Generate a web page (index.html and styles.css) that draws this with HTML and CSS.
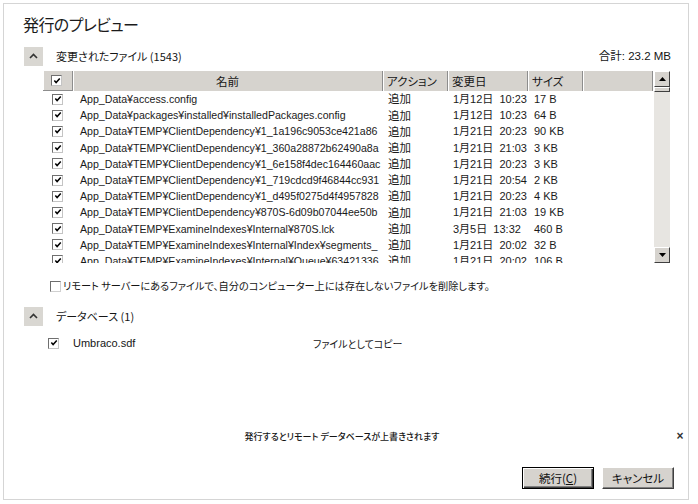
FILE: index.html
```html
<!DOCTYPE html>
<html lang="ja">
<head>
<meta charset="utf-8">
<title>発行のプレビュー</title>
<link rel="stylesheet" href="styles.css">
</head>
<body>
<div class="dialog">
  <h1 class="title">発行のプレビュー</h1>

  <div class="sec-head">
    <span class="toggle"><svg width="19" height="19" viewBox="0 0 19 19"><polyline points="6,11 9.5,7.5 13,11" fill="none" stroke="#333" stroke-width="1.6"/></svg></span>
    <span class="sec-label">変更されたファイル (1543)</span>
    <span class="total">合計: 23.2 MB</span>
  </div>

  <div class="list">
    <div class="grid">
      <div class="thead">
        <div class="th th-cb"><span class="cb on"><svg viewBox="0 0 9 9"><path d="M1.5 4 L3.5 6.3 L7.6 1.8" fill="none" stroke="#000" stroke-width="1.7"/></svg></span></div>
        <div class="th th-name">名前</div>
        <div class="th">アクション</div>
        <div class="th">変更日</div>
        <div class="th">サイズ</div>
        <div class="th"></div>
      </div>
      <div class="tbody">
        <div class="row"><div class="c-cb"><span class="cb on"><svg viewBox="0 0 9 9"><path d="M1.5 4 L3.5 6.3 L7.6 1.8" fill="none" stroke="#000" stroke-width="1.7"/></svg></span></div><div class="c-name">App_Data¥access.config</div><div class="c-act">追加</div><div class="c-date">1月12日&nbsp;&nbsp;10:23</div><div class="c-size">17 B</div><div></div></div>
        <div class="row"><div class="c-cb"><span class="cb on"><svg viewBox="0 0 9 9"><path d="M1.5 4 L3.5 6.3 L7.6 1.8" fill="none" stroke="#000" stroke-width="1.7"/></svg></span></div><div class="c-name">App_Data¥packages¥installed¥installedPackages.config</div><div class="c-act">追加</div><div class="c-date">1月12日&nbsp;&nbsp;10:23</div><div class="c-size">64 B</div><div></div></div>
        <div class="row"><div class="c-cb"><span class="cb on"><svg viewBox="0 0 9 9"><path d="M1.5 4 L3.5 6.3 L7.6 1.8" fill="none" stroke="#000" stroke-width="1.7"/></svg></span></div><div class="c-name">App_Data¥TEMP¥ClientDependency¥1_1a196c9053ce421a86</div><div class="c-act">追加</div><div class="c-date">1月21日&nbsp;&nbsp;20:23</div><div class="c-size">90 KB</div><div></div></div>
        <div class="row"><div class="c-cb"><span class="cb on"><svg viewBox="0 0 9 9"><path d="M1.5 4 L3.5 6.3 L7.6 1.8" fill="none" stroke="#000" stroke-width="1.7"/></svg></span></div><div class="c-name">App_Data¥TEMP¥ClientDependency¥1_360a28872b62490a8a</div><div class="c-act">追加</div><div class="c-date">1月21日&nbsp;&nbsp;21:03</div><div class="c-size">3 KB</div><div></div></div>
        <div class="row"><div class="c-cb"><span class="cb on"><svg viewBox="0 0 9 9"><path d="M1.5 4 L3.5 6.3 L7.6 1.8" fill="none" stroke="#000" stroke-width="1.7"/></svg></span></div><div class="c-name">App_Data¥TEMP¥ClientDependency¥1_6e158f4dec164460aac</div><div class="c-act">追加</div><div class="c-date">1月21日&nbsp;&nbsp;20:23</div><div class="c-size">3 KB</div><div></div></div>
        <div class="row"><div class="c-cb"><span class="cb on"><svg viewBox="0 0 9 9"><path d="M1.5 4 L3.5 6.3 L7.6 1.8" fill="none" stroke="#000" stroke-width="1.7"/></svg></span></div><div class="c-name">App_Data¥TEMP¥ClientDependency¥1_719cdcd9f46844cc931</div><div class="c-act">追加</div><div class="c-date">1月21日&nbsp;&nbsp;20:54</div><div class="c-size">2 KB</div><div></div></div>
        <div class="row"><div class="c-cb"><span class="cb on"><svg viewBox="0 0 9 9"><path d="M1.5 4 L3.5 6.3 L7.6 1.8" fill="none" stroke="#000" stroke-width="1.7"/></svg></span></div><div class="c-name">App_Data¥TEMP¥ClientDependency¥1_d495f0275d4f4957828</div><div class="c-act">追加</div><div class="c-date">1月21日&nbsp;&nbsp;20:23</div><div class="c-size">4 KB</div><div></div></div>
        <div class="row"><div class="c-cb"><span class="cb on"><svg viewBox="0 0 9 9"><path d="M1.5 4 L3.5 6.3 L7.6 1.8" fill="none" stroke="#000" stroke-width="1.7"/></svg></span></div><div class="c-name">App_Data¥TEMP¥ClientDependency¥870S-6d09b07044ee50b</div><div class="c-act">追加</div><div class="c-date">1月21日&nbsp;&nbsp;21:03</div><div class="c-size">19 KB</div><div></div></div>
        <div class="row"><div class="c-cb"><span class="cb on"><svg viewBox="0 0 9 9"><path d="M1.5 4 L3.5 6.3 L7.6 1.8" fill="none" stroke="#000" stroke-width="1.7"/></svg></span></div><div class="c-name">App_Data¥TEMP¥ExamineIndexes¥Internal¥870S.lck</div><div class="c-act">追加</div><div class="c-date">3月5日&nbsp;&nbsp;13:32</div><div class="c-size">460 B</div><div></div></div>
        <div class="row"><div class="c-cb"><span class="cb on"><svg viewBox="0 0 9 9"><path d="M1.5 4 L3.5 6.3 L7.6 1.8" fill="none" stroke="#000" stroke-width="1.7"/></svg></span></div><div class="c-name">App_Data¥TEMP¥ExamineIndexes¥Internal¥Index¥segments_</div><div class="c-act">追加</div><div class="c-date">1月21日&nbsp;&nbsp;20:02</div><div class="c-size">32 B</div><div></div></div>
        <div class="row"><div class="c-cb"><span class="cb on"><svg viewBox="0 0 9 9"><path d="M1.5 4 L3.5 6.3 L7.6 1.8" fill="none" stroke="#000" stroke-width="1.7"/></svg></span></div><div class="c-name">App_Data¥TEMP¥ExamineIndexes¥Internal¥Queue¥63421336</div><div class="c-act">追加</div><div class="c-date">1月21日&nbsp;&nbsp;20:02</div><div class="c-size">106 B</div><div></div></div>
      </div>
    </div>
    <div class="sb">
      <div class="sb-btn"><svg width="7" height="4" viewBox="0 0 7 4"><polygon points="0,4 7,4 3.5,0" fill="#000"/></svg></div>
      <div class="sb-thumb"></div>
      <div class="sb-track"></div>
      <div class="sb-btn"><svg width="7" height="4" viewBox="0 0 7 4"><polygon points="0,0 7,0 3.5,4" fill="#000"/></svg></div>
    </div>
  </div>

  <div class="opt"><span class="cb off"></span><span class="opt-text">リモート サーバーにあるファイルで、自分のコンピューター上には存在しないファイルを削除します。</span></div>

  <div class="sec-head sec2">
    <span class="toggle"><svg width="19" height="19" viewBox="0 0 19 19"><polyline points="6,11 9.5,7.5 13,11" fill="none" stroke="#333" stroke-width="1.6"/></svg></span>
    <span class="sec-label">データベース (1)</span>
  </div>

  <div class="db-row">
    <span class="cb on db-cb"><svg viewBox="0 0 9 9"><path d="M1.5 4 L3.5 6.3 L7.6 1.8" fill="none" stroke="#000" stroke-width="1.7"/></svg></span>
    <span class="db-name">Umbraco.sdf</span>
    <span class="db-act">ファイルとしてコピー</span>
  </div>

  <div class="spacer"></div>

  <div class="msg-row">
    <span class="msg">発行するとリモート データベースが上書きされます</span>
    <span class="close">×</span>
  </div>

  <div class="buttons">
    <span class="btn btn-default">続行(<u>C</u>)</span>
    <span class="btn">キャンセル</span>
  </div>
</div>
</body>
</html>
```

FILE: styles.css
```css
html, body {
  margin: 0;
  padding: 0;
}
body {
  width: 698px;
  height: 504px;
  overflow: hidden;
  background: #ffffff;
  font-family: "Liberation Sans", "Noto Sans CJK JP", sans-serif;
  color: #151515;
}
.dialog {
  margin: 3px 0 0 3px;
  width: 684px;
  height: 495px;
  border: 1px solid #d5d5d5;
  display: flex;
  flex-direction: column;
  background: #fff;
}
.title {
  margin: 10px 0 0 19px;
  font-family: "Noto Sans CJK JP", sans-serif;
  font-feature-settings: "palt" 1;
  font-size: 16px;
  font-weight: normal;
  line-height: 20px;
  height: 20px;
  color: #1b1b1b;
  letter-spacing: -0.6px;
}
.sec-head {
  margin-top: 13px;
  padding: 0 17px 0 20px;
  height: 19px;
  display: flex;
  align-items: center;
  font-family: "Noto Sans CJK JP", sans-serif;
  font-feature-settings: "palt" 1;
  font-size: 11px;
  line-height: 19px;
}
.toggle {
  width: 19px;
  height: 19px;
  background: #d9d7d2;
  display: block;
  flex: none;
}
.toggle svg { display: block; }
.sec-label {
  margin-left: 13px;
  flex: 1;
}
.total {
  font-family: "Liberation Sans", "Noto Sans CJK JP", sans-serif;
  font-size: 11.5px;
}
.list {
  margin: 5px 0 0 39px;
  width: 627px;
  height: 192px;
  display: flex;
  gap: 1px;
  overflow: hidden;
}
.grid {
  width: 610px;
  display: flex;
  flex-direction: column;
  overflow: hidden;
}
.thead, .row {
  display: grid;
  grid-template-columns: 30px 310px 65px 80px 55px 70px;
}
.thead {
  height: 20px;
  flex: none;
}
.th {
  background: #d6d3ce;
  border-right: 1px solid #8d8d8d;
  box-shadow: inset 1px 0 0 #fff;
  font-family: "Noto Sans CJK JP", sans-serif;
  font-feature-settings: "palt" 1;
  font-size: 11.5px;
  line-height: 20px;
  padding-left: 4px;
  white-space: nowrap;
  overflow: hidden;
}
.th-cb {
  padding-left: 8px;
  display: flex;
  align-items: center;
  border-bottom: 1px solid #8d8d8d;
  box-sizing: border-box;
}
.th-name {
  text-align: center;
  padding-left: 0;
}
.tbody {
  overflow: hidden;
  flex: 1;
}
.row {
  height: 16.2px;
  font-size: 10.6px;
  line-height: 16px;
  white-space: nowrap;
  color: #1a1a1a;
}
.row > div {
  overflow: hidden;
  height: 16.2px;
}
.c-cb {
  padding-left: 9px;
  display: flex;
  align-items: center;
}
.c-name { padding-left: 7px; }
.c-act {
  padding-left: 5px;
  display: flex;
  align-items: center;
  font-family: "Noto Sans CJK JP", sans-serif;
  font-size: 11.5px;
  line-height: 1;
}
.c-date { padding-left: 5px; font-size: 11px; }
.c-size { padding-left: 6px; font-size: 11px; }
.cb {
  width: 11px;
  height: 11px;
  box-sizing: border-box;
  border: 1px solid;
  border-color: #6f6f6f #c4c4c4 #c4c4c4 #6f6f6f;
  background: #fff;
  display: inline-flex;
  align-items: center;
  justify-content: center;
  flex: none;
}
.cb svg {
  width: 8px;
  height: 8px;
  display: block;
}
.sb {
  width: 16px;
  display: flex;
  flex-direction: column;
  background: #e7e5e1;
}
.sb-btn {
  height: 16px;
  box-sizing: border-box;
  background: #d6d3ce;
  border: 1px solid;
  border-color: #fff #404040 #404040 #fff;
  display: flex;
  align-items: center;
  justify-content: center;
  flex: none;
}
.sb-thumb {
  height: 5px;
  box-sizing: border-box;
  background: #d6d3ce;
  border: 1px solid;
  border-color: #fff #404040 #404040 #fff;
  flex: none;
}
.sb-track { flex: 1; }
.opt {
  margin: 15px 0 0 46px;
  height: 16px;
  display: flex;
  align-items: center;
}
.opt .cb {
  border-color: #6d6d6d #d0d0d0 #d0d0d0 #6d6d6d;
}
.opt-text {
  margin-left: 2px;
  font-family: "Noto Sans CJK JP", sans-serif;
  font-feature-settings: "palt" 1;
  font-size: 10.2px;
  line-height: 16px;
}
.sec2 { margin-top: 13px; }
.db-row {
  margin: 9px 0 0 44px;
  height: 16px;
  display: flex;
  align-items: center;
  font-size: 11px;
}
.db-name { margin-left: 14px; width: 240px; }
.db-act {
  font-family: "Noto Sans CJK JP", sans-serif;
  font-feature-settings: "palt" 1;
  font-size: 10px;
}
.spacer { flex: 1; }
.msg-row {
  height: 14px;
  display: flex;
  align-items: center;
  padding-left: 6px;
}
.msg {
  flex: 1;
  text-align: center;
  font-family: "Noto Sans CJK JP", sans-serif;
  font-feature-settings: "palt" 1;
  font-size: 9px;
  font-weight: 500;
  letter-spacing: 0;
}
.close {
  width: 12px;
  margin-right: 2px;
  font-size: 12px;
  font-weight: bold;
  color: #333;
  text-align: center;
}
.buttons {
  margin: 24px 0 10px 0;
  padding-right: 14px;
  display: flex;
  justify-content: flex-end;
  gap: 8px;
}
.btn {
  width: 72px;
  height: 22px;
  box-sizing: border-box;
  background: #d6d3ce;
  border: 1px solid;
  border-color: #fff #404040 #404040 #fff;
  box-shadow: inset -1px -1px 0 #808080;
  display: flex;
  align-items: center;
  justify-content: center;
  font-family: "Noto Sans CJK JP", sans-serif;
  font-feature-settings: "palt" 1;
  font-size: 11.5px;
  color: #111;
}
.btn-default {
  border: 1px solid #000;
  box-shadow: inset 1px 1px 0 #fff, inset -1px -1px 0 #404040, inset -2px -2px 0 #808080;
}
.btn u { text-decoration: underline; }
```
